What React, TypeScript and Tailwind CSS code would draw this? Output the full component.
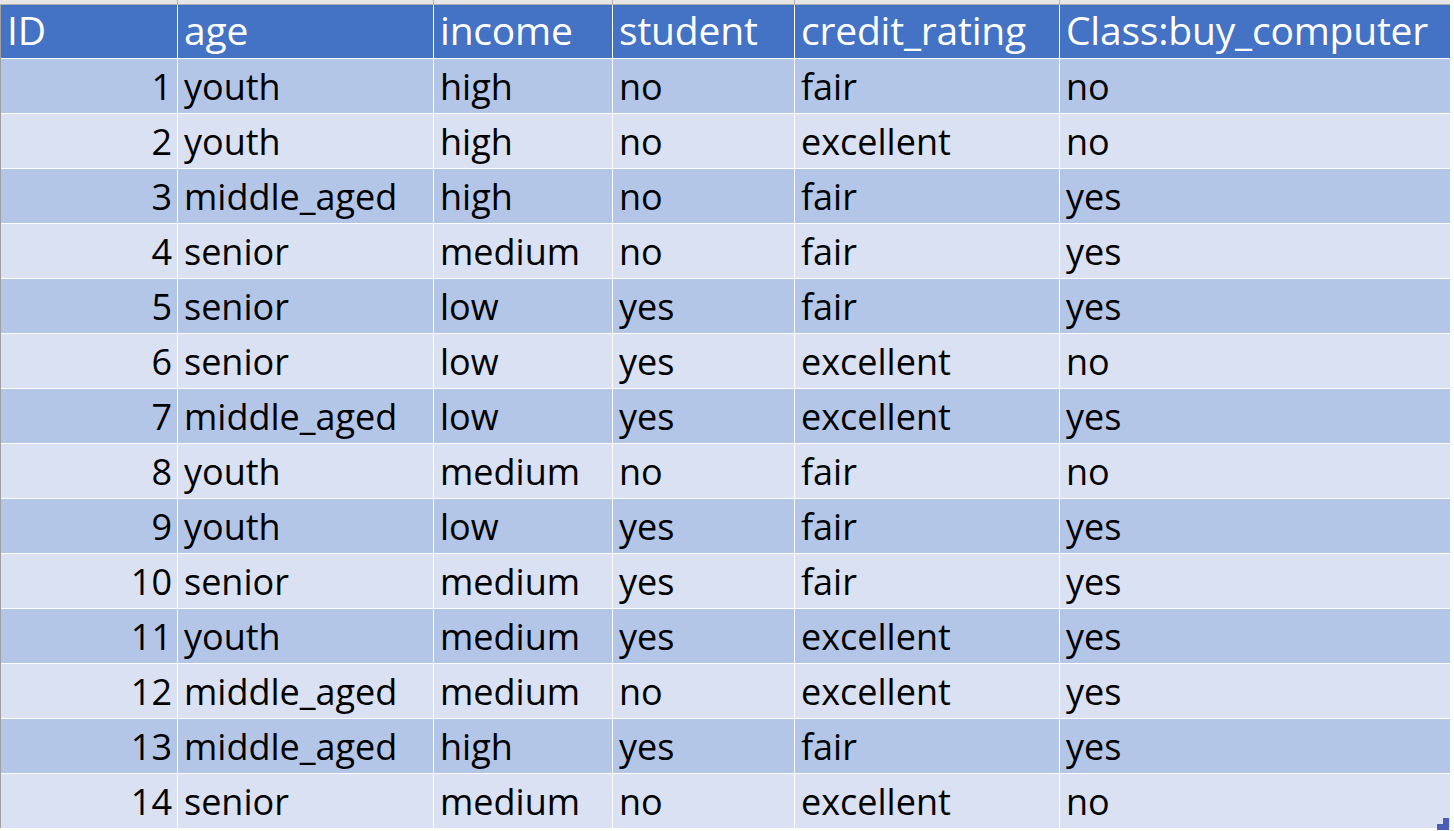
import React from "react";

const rows: [number, string, string, string, string, string][] = [
  [1, "youth", "high", "no", "fair", "no"],
  [2, "youth", "high", "no", "excellent", "no"],
  [3, "middle_aged", "high", "no", "fair", "yes"],
  [4, "senior", "medium", "no", "fair", "yes"],
  [5, "senior", "low", "yes", "fair", "yes"],
  [6, "senior", "low", "yes", "excellent", "no"],
  [7, "middle_aged", "low", "yes", "excellent", "yes"],
  [8, "youth", "medium", "no", "fair", "no"],
  [9, "youth", "low", "yes", "fair", "yes"],
  [10, "senior", "medium", "yes", "fair", "yes"],
  [11, "youth", "medium", "yes", "excellent", "yes"],
  [12, "middle_aged", "medium", "no", "excellent", "yes"],
  [13, "middle_aged", "high", "yes", "fair", "yes"],
  [14, "senior", "medium", "no", "excellent", "no"],
];

const headers = ["ID", "age", "income", "student", "credit_rating", "Class:buy_computer"];
const cols = "grid-cols-[176px_255px_178px_181px_264px_390px]";

export default function App() {
  return (
    <div
      className="w-[1454px] h-[831px] bg-white overflow-hidden relative"
      style={{ fontFamily: '"Open Sans", "Noto Sans", sans-serif' }}
    >
      <div className="h-[4px] bg-[#e6e6e6] border-b border-[#b0b0b0] box-content w-[1450px] grid grid-cols-[177px_256px_179px_182px_265px_391px]">
        {headers.map((h, i) => (
          <div key={i} className={i > 0 ? "border-l border-[#b0b0b0]" : ""} />
        ))}
      </div>
      <div className="w-[1450px] border-l border-[#a0a0a0] flex flex-col gap-[1px]">
        <div className={`grid ${cols} gap-x-[1px] h-[53px] bg-white border-b-[1px] border-white`}>
          {headers.map((h, i) => (
            <div
              key={i}
              className="bg-[#4472C4] text-white text-[39px] leading-[50px] pb-[3px] pl-[6px] whitespace-nowrap flex items-center tracking-[-0.2px]"
            >
              {h}
            </div>
          ))}
        </div>
        {rows.map((r, ri) => (
          <div key={ri} className={`grid ${cols} gap-x-[1px] h-[54px]`}>
            {r.map((c, ci) => (
              <div
                key={ci}
                className={`${ri % 2 === 0 ? "bg-[#B4C6E7]" : "bg-[#D9E1F2]"} text-black text-[36px] leading-[52px] pt-[2px] whitespace-nowrap flex items-center ${
                  ci === 0 ? "justify-end pr-[5px]" : "pl-[6px]"
                }`}
              >
                {c}
              </div>
            ))}
          </div>
        ))}
      </div>
      <div className="absolute left-[1443px] top-[818px] w-[6px] h-[12px] bg-[#4B5EB5]" />
      <div className="absolute left-[1437px] top-[824px] w-[6px] h-[6px] bg-[#4B5EB5]" />
    </div>
  );
}
